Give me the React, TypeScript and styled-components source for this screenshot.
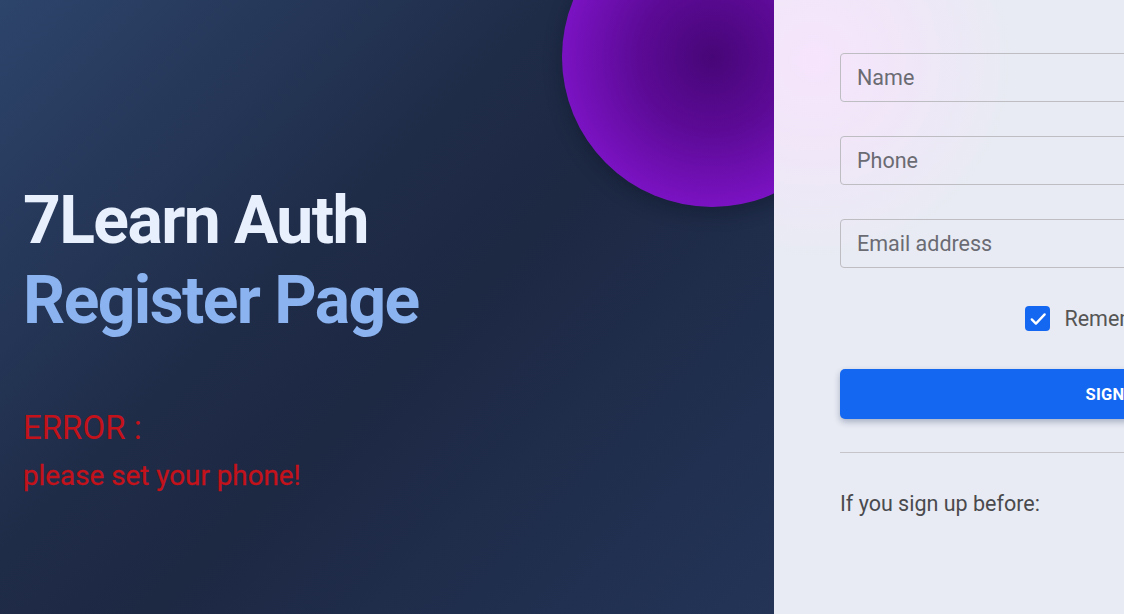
import React from 'react';
import styled, { createGlobalStyle } from 'styled-components';

const GlobalStyle = createGlobalStyle`
  html, body {
    margin: 0;
    padding: 0;
    overflow: hidden;
    font-family: Roboto, "Liberation Sans", Arial, sans-serif;
  }
  * { box-sizing: border-box; }
`;

const Page = styled.div`
  position: relative;
  display: flex;
  width: 1124px;
  height: 614px;
  overflow: hidden;
`;

const Hero = styled.section`
  position: relative;
  flex: 0 0 774px;
  display: flex;
  flex-direction: column;
  padding: 181px 0 0 23px;
  background: linear-gradient(135deg, #2d446b 0%, #1f2c48 40%, #1d2843 55%, #233457 100%);
`;

const Orb = styled.div`
  position: absolute;
  left: 562px;
  top: -93px;
  width: 300px;
  height: 300px;
  border-radius: 50%;
  background: radial-gradient(circle at 50% 50%, #470677 0%, #5c0a96 35%, #7a12c2 70%, #8f17d9 100%);
  box-shadow: 0 6px 18px rgba(10, 14, 30, 0.35);
  z-index: 1;
`;

const Title = styled.h1<{ $tone: string }>`
  margin: 0;
  font-size: 66px;
  line-height: 80px;
  font-weight: 700;
  letter-spacing: -1.6px;
  color: ${(p) => p.$tone};
`;

const ErrorBlock = styled.div`
  margin-top: 68px;
  display: flex;
  flex-direction: column;
  gap: 12px;
  color: #c4121b;
`;

const ErrorLabel = styled.div`
  font-size: 33px;
  line-height: 38px;
`;

const ErrorText = styled.div`
  font-size: 27.8px;
  line-height: 34px;
  -webkit-text-stroke: 0.3px #c4121b;
`;

const Side = styled.section`
  position: relative;
  z-index: 2;
  flex: 0 0 680px;
  padding: 53px 0 0 66px;
  background:
    radial-gradient(circle at 40px 60px, rgba(246, 228, 252, 1) 0px, rgba(246, 228, 252, 0.6) 90px, rgba(246, 228, 252, 0) 200px),
    #e8ebf3;
`;

const Form = styled.form`
  width: 556px;
  display: flex;
  flex-direction: column;
`;

const Field = styled.input`
  height: 49px;
  margin-bottom: 34px;
  padding: 0 16px;
  border: 1px solid #bdbdc2;
  border-radius: 4px;
  background: transparent;
  font-family: inherit;
  font-size: 21.5px;
  color: #333;
  outline: none;
  &::placeholder { color: #6b6b73; }
`;

const CheckRow = styled.label`
  display: flex;
  align-items: center;
  justify-content: center;
  gap: 14px;
  margin: 4px 0 0 0;
  padding-right: 6px;
  font-size: 21.5px;
  color: #555;
  height: 25px;
`;

const Box = styled.span`
  width: 25px;
  height: 25px;
  border-radius: 4px;
  background: #1467f1;
  display: flex;
  align-items: center;
  justify-content: center;
`;

const Submit = styled.button`
  margin-top: 38px;
  height: 50px;
  border: none;
  border-radius: 5px;
  background: #1467f1;
  color: #fff;
  font-family: inherit;
  font-size: 16.5px;
  font-weight: 700;
  letter-spacing: 0.2px;
  box-shadow: 0 3px 6px rgba(20, 40, 90, 0.3);
`;

const Divider = styled.hr`
  margin: 33px 0 0 0;
  border: none;
  border-top: 1px solid #c4c4c9;
`;

const Footnote = styled.p`
  margin: 38px 0 0 0;
  font-size: 21.5px;
  color: #4a4a4e;
`;

export default function App() {
  return (
    <Page>
      <GlobalStyle />
      <Hero>
        <Orb />
        <Title $tone="#e9f0fd">7Learn Auth</Title>
        <Title $tone="#8ab3f0">Register Page</Title>
        <ErrorBlock>
          <ErrorLabel>ERROR :</ErrorLabel>
          <ErrorText>please set your phone!</ErrorText>
        </ErrorBlock>
      </Hero>
      <Side>
        <Form onSubmit={(e) => e.preventDefault()}>
          <Field placeholder="Name" />
          <Field placeholder="Phone" />
          <Field placeholder="Email address" />
          <CheckRow>
            <Box>
              <svg width="20" height="20" viewBox="0 0 24 24" fill="none" stroke="#fff" strokeWidth="2.8" strokeLinecap="round" strokeLinejoin="round">
                <path d="M4.5 12.5l5 5L20 6.5" />
              </svg>
            </Box>
            Remember me
          </CheckRow>
          <Submit type="submit">SIGN UP</Submit>
          <Divider />
          <Footnote>If you sign up before:</Footnote>
        </Form>
      </Side>
    </Page>
  );
}
